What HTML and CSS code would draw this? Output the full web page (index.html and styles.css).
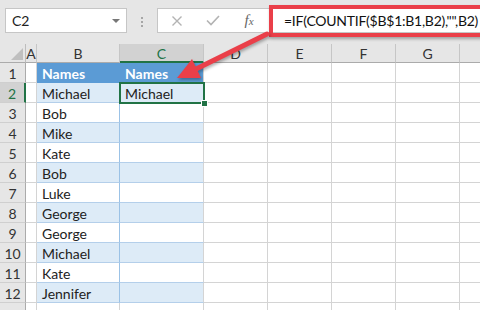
FILE: index.html
```html
<!DOCTYPE html>
<html>
<head>
<meta charset="utf-8">
<link rel="stylesheet" href="styles.css">
</head>
<body>
<div class="app">
  <div class="toolbar">
    <div class="namebox"><span>C2</span><span class="caret"></span></div>
    <div class="grip"><i></i><i></i><i></i></div>
    <div class="fbar">
      <div class="fbtns">
        <span class="btn"><svg width="12" height="12" viewBox="0 0 12 12"><path d="M1.5 1.5 L10.5 10.5 M10.5 1.5 L1.5 10.5" stroke="#b3b3b3" stroke-width="1.4" fill="none"/></svg></span>
        <span class="btn"><svg width="14" height="11" viewBox="0 0 14 11"><path d="M1 5.5 L5 9.5 L13 1" stroke="#b3b3b3" stroke-width="1.6" fill="none"/></svg></span>
        <span class="btn fx">f<small>x</small></span>
      </div>
      <div class="finput">=IF(COUNTIF($B$1:B1,B2),"",B2)</div>
    </div>
  </div>

  <div class="sheet">
    <div class="corner"><span class="tri"></span></div>
    <div class="ch">A</div><div class="ch">B</div><div class="ch selh">C</div><div class="ch">D</div><div class="ch">E</div><div class="ch">F</div><div class="ch">G</div><div class="ch"></div>

    <div class="rh">1</div><div class="c"></div><div class="c th tb">Names</div><div class="c th">Names</div><div class="c"></div><div class="c"></div><div class="c"></div><div class="c"></div><div class="c"></div>
    <div class="rh selr">2</div><div class="c"></div><div class="c t band tb">Michael</div><div class="c t band sel">Michael</div><div class="c"></div><div class="c"></div><div class="c"></div><div class="c"></div><div class="c"></div>
    <div class="rh">3</div><div class="c"></div><div class="c t tb">Bob</div><div class="c t"></div><div class="c"></div><div class="c"></div><div class="c"></div><div class="c"></div><div class="c"></div>
    <div class="rh">4</div><div class="c"></div><div class="c t band tb">Mike</div><div class="c t band"></div><div class="c"></div><div class="c"></div><div class="c"></div><div class="c"></div><div class="c"></div>
    <div class="rh">5</div><div class="c"></div><div class="c t tb">Kate</div><div class="c t"></div><div class="c"></div><div class="c"></div><div class="c"></div><div class="c"></div><div class="c"></div>
    <div class="rh">6</div><div class="c"></div><div class="c t band tb">Bob</div><div class="c t band"></div><div class="c"></div><div class="c"></div><div class="c"></div><div class="c"></div><div class="c"></div>
    <div class="rh">7</div><div class="c"></div><div class="c t tb">Luke</div><div class="c t"></div><div class="c"></div><div class="c"></div><div class="c"></div><div class="c"></div><div class="c"></div>
    <div class="rh">8</div><div class="c"></div><div class="c t band tb">George</div><div class="c t band"></div><div class="c"></div><div class="c"></div><div class="c"></div><div class="c"></div><div class="c"></div>
    <div class="rh">9</div><div class="c"></div><div class="c t tb">George</div><div class="c t"></div><div class="c"></div><div class="c"></div><div class="c"></div><div class="c"></div><div class="c"></div>
    <div class="rh">10</div><div class="c"></div><div class="c t band tb">Michael</div><div class="c t band"></div><div class="c"></div><div class="c"></div><div class="c"></div><div class="c"></div><div class="c"></div>
    <div class="rh">11</div><div class="c"></div><div class="c t tb">Kate</div><div class="c t"></div><div class="c"></div><div class="c"></div><div class="c"></div><div class="c"></div><div class="c"></div>
    <div class="rh">12</div><div class="c"></div><div class="c t band tb">Jennifer</div><div class="c t band"></div><div class="c"></div><div class="c"></div><div class="c"></div><div class="c"></div><div class="c"></div>
    <div class="rh"></div><div class="c"></div><div class="c"></div><div class="c"></div><div class="c"></div><div class="c"></div><div class="c"></div><div class="c"></div><div class="c"></div>
  </div>

  <div class="callout"></div>
  <svg class="arrow" width="480" height="310" viewBox="0 0 480 310">
    <line x1="267" y1="34" x2="194" y2="70" stroke="#ea3f49" stroke-width="5" stroke-linecap="round"/>
    <polygon points="177,78 201,78 192,59" fill="#ea3f49"/>
  </svg>
</div>
</body>
</html>
```

FILE: styles.css
```css
html, body {
  margin: 0;
  padding: 0;
}
body {
  width: 480px;
  height: 310px;
  overflow: hidden;
  font-family: "Lato", "Open Sans", sans-serif;
  color: #222;
}
.app {
  position: relative;
  width: 480px;
  height: 310px;
  overflow: hidden;
  background: #fff;
}

/* formula toolbar */
.toolbar {
  height: 44px;
  box-sizing: border-box;
  background: #e6e6e6;
  display: flex;
  align-items: flex-start;
  padding-top: 8px;
}
.namebox {
  flex: none;
  margin-left: 5px;
  width: 122px;
  height: 25px;
  box-sizing: border-box;
  border: 1px solid #c6c6c6;
  background: #fff;
  display: flex;
  align-items: center;
  justify-content: space-between;
  padding: 0 6px 0 6px;
  font-size: 14px;
  color: #222;
}
.caret {
  width: 0;
  height: 0;
  border-left: 4px solid transparent;
  border-right: 4px solid transparent;
  border-top: 4px solid #777;
  margin-top: 1px;
}
.grip {
  flex: none;
  margin-left: 14px;
  margin-top: 9px;
  width: 2px;
  display: flex;
  flex-direction: column;
  gap: 2px;
}
.grip i {
  display: block;
  width: 2px;
  height: 2px;
  background: #a6a6a6;
}
.fbar {
  margin-left: 14px;
  flex: 1;
  min-width: 0;
  height: 25px;
  box-sizing: border-box;
  border: 1px solid #c6c6c6;
  border-right: none;
  background: #fff;
  display: flex;
}
.fbtns {
  width: 110px;
  flex: none;
  display: flex;
  padding-left: 1px;
  box-sizing: border-box;
}
.btn {
  width: 36px;
  display: flex;
  align-items: center;
  justify-content: center;
}
.fx {
  font-family: "Liberation Serif", serif;
  font-style: italic;
  font-size: 15px;
  color: #666;
}
.fx small {
  font-size: 11px;
}
.finput {
  flex: 1;
  min-width: 0;
  padding-left: 16px;
  font-size: 14px;
  letter-spacing: -0.25px;
  line-height: 23px;
  color: #111;
  white-space: nowrap;
  overflow: hidden;
}

/* sheet grid */
.sheet {
  display: grid;
  grid-template-columns: 26px 11px 83px 84px 64px 64px 64px 64px 64px;
  grid-template-rows: 19px repeat(13, 20px);
  width: 524px;
}
.sheet > div {
  box-sizing: border-box;
  border-right: 1px solid #d4d4d4;
  border-bottom: 1px solid #d4d4d4;
  white-space: nowrap;
  overflow: visible;
}
.corner {
  background: #e6e6e6;
  display: flex;
  align-items: flex-end;
  justify-content: flex-end;
  padding: 0 2px 2px 0;
}
.sheet > .corner {
  border-right-color: #bdbdbd;
  border-bottom-color: #ababab;
}
.tri {
  width: 0;
  height: 0;
  border-left: 12px solid transparent;
  border-bottom: 12px solid #bfbfbf;
}
.sheet > .ch {
  background: #e6e6e6;
  border-right-color: #c6c6c6;
  border-bottom-color: #ababab;
  text-align: center;
  font-size: 14px;
  line-height: 19px;
  color: #333;
}
.sheet > .ch.selh {
  background: #d2d2d2;
  color: #217346;
  border-bottom: 2px solid #217346;
}
.sheet > .rh {
  background: #e6e6e6;
  border-right-color: #ababab;
  border-bottom-color: #cfcfcf;
  text-align: center;
  font-size: 14px;
  line-height: 19px;
  padding-top: 1px;
  color: #333;
}
.sheet > .rh.selr {
  background: #d2d2d2;
  color: #217346;
  border-right: 2px solid #217346;
}
.c {
  font-size: 14px;
  line-height: 19px;
  padding: 1px 0 0 5px;
}
.sheet > .th {
  background: #5b9bd5;
  color: #fff;
  font-weight: bold;
  border-bottom-color: #5b9bd5;
}
.sheet > .th.tb {
  border-right-color: #5b9bd5;
}
.sheet > .t {
  border-bottom-color: #b4cfea;
}
.sheet > .tb {
  border-right-color: #9bc2e6;
}
.sheet > .band {
  background: #ddebf7;
}
.sel {
  position: relative;
}
.sel::after {
  content: "";
  position: absolute;
  left: -1px;
  top: -1px;
  right: -2px;
  bottom: -2px;
  border: 2px solid #217346;
}
.sel::before {
  content: "";
  position: absolute;
  right: -5px;
  bottom: -5px;
  width: 7px;
  height: 7px;
  box-sizing: border-box;
  background: #217346;
  border: 1px solid #fff;
  z-index: 2;
}

/* annotation overlays */
.callout {
  position: absolute;
  left: 269px;
  top: 5px;
  width: 215px;
  height: 32px;
  box-sizing: border-box;
  border: 4px solid #ea3f49;
  box-shadow: 1px 2px 3px rgba(0, 0, 0, 0.3);
}
.arrow {
  position: absolute;
  left: 0;
  top: 0;
  pointer-events: none;
  filter: drop-shadow(1px 2px 1.5px rgba(0, 0, 0, 0.3));
}
```
